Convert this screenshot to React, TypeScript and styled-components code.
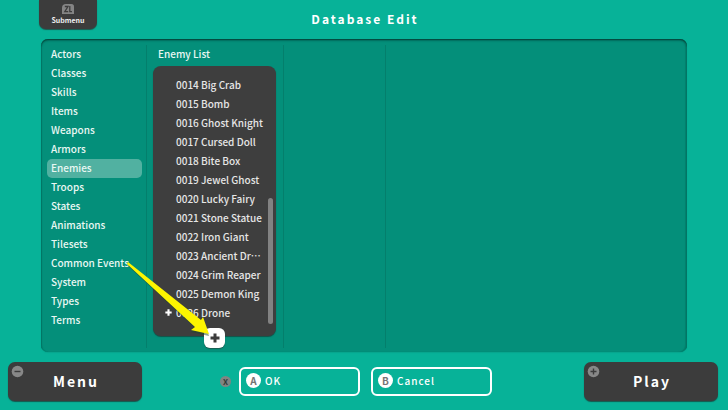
import React from "react";
import styled, { createGlobalStyle } from "styled-components";

const GlobalStyle = createGlobalStyle`
  *, *::before, *::after { box-sizing: border-box; }
  body {
    margin: 0;
    background: #07b298;
    color: #e9f7f3;
    font-family: "Noto Sans CJK JP", "Noto Sans", sans-serif;
    font-size: 10px;
    font-weight: 500;
  }
  button {
    font: inherit;
    color: inherit;
    border: 0;
    padding: 0;
    background: none;
    cursor: pointer;
  }
`;

const Page = styled.div`
  min-height: 100vh;
  display: flex;
  flex-direction: column;
`;

const Header = styled.header`
  display: grid;
  grid-template-columns: 1fr auto 1fr;
  align-items: start;
  height: 39px;
  padding: 0 39px;
`;

const SubmenuButton = styled.button`
  justify-self: start;
  display: flex;
  flex-direction: column;
  align-items: center;
  gap: 1px;
  width: 58px;
  height: 29px;
  padding-top: 4px;
  border-radius: 0 0 7px 7px;
  background: #3c3c3c;
  color: #eeeeee;
  box-shadow: 0 1px 1px #1d5a50;
  font-size: 7px;
  line-height: 10px;
  font-weight: 700;
`;

const Title = styled.h1`
  margin: 0;
  padding: 9px 0 0 2px;
  color: #ffffff;
  font-size: 12px;
  line-height: 20px;
  font-weight: 700;
  letter-spacing: 2px;
`;

const Panel = styled.main`
  flex: 1;
  display: grid;
  grid-template-columns: 106px 137px 102px 1fr;
  margin: 0 41px;
  padding: 6px 0 4px;
  border-radius: 7px;
  background: #048f7a;
  box-shadow: inset 0 1px 1px #04493f, inset 0 2px 2px #04705f, inset 1px 0 1px #04806d,
    inset -2px 0 1px #04806d, 0 1px 1px #08a58d;
`;

const Column = styled.section<{ $last?: boolean }>`
  min-width: 0;
  padding: 0 7px 0 6px;
  border-right: ${(p) => (p.$last ? "0" : "1px solid #047f6c")};
`;

const Categories = styled.nav`
  min-width: 0;
  padding: 0 4px 0 6px;
  border-right: 1px solid #047f6c;
`;

const CategoryButton = styled.button<{ $selected?: boolean }>`
  display: block;
  width: 95px;
  height: 19px;
  padding: 0 0 2px 4px;
  border-radius: 5px;
  background: ${(p) => (p.$selected ? "#51b1a1" : "transparent")};
  text-align: left;
  line-height: 17px;
`;

const ListTitle = styled.h2`
  margin: 0;
  padding: 0 5px 2px;
  font-size: 10px;
  font-weight: 500;
  line-height: 17px;
`;

const ListBox = styled.div`
  position: relative;
  height: 270px;
  margin-top: 2px;
  padding: 9px 10px;
  border-radius: 8px;
  background: #3e3e3e;
  box-shadow: 0 1px 1px #135147;
`;

const EnemyItems = styled.ul`
  margin: 0;
  padding: 0;
  list-style: none;
`;

const EnemyButton = styled.button`
  display: grid;
  grid-template-columns: 13px 1fr;
  align-items: center;
  width: 100%;
  height: 19px;
  line-height: 19px;
  text-align: left;
  white-space: nowrap;
  color: #e6e6e6;
`;

const Marker = styled.span`
  display: flex;
  padding-left: 2px;
`;

const ScrollThumb = styled.div`
  position: absolute;
  right: 3px;
  bottom: 12px;
  width: 5px;
  height: 126px;
  border-radius: 3px;
  background: #828282;
`;

const AddButton = styled.button`
  position: absolute;
  left: 51px;
  bottom: -12px;
  display: grid;
  place-items: center;
  width: 21px;
  height: 20px;
  border-radius: 6px;
  background: #ffffff;
  box-shadow: 0 1px 1px #1c5c51;
`;

const Arrow = styled.svg`
  position: absolute;
  left: -29px;
  top: 194px;
  width: 88px;
  height: 80px;
  pointer-events: none;
`;

const Footer = styled.footer`
  display: flex;
  justify-content: space-between;
  padding: 10px 10px 9px 8px;
`;

const MainButton = styled.button`
  position: relative;
  width: 134px;
  height: 39px;
  padding: 0 0 2px 2px;
  border-radius: 7px;
  background: #3c3c3c;
  color: #ffffff;
  box-shadow: 0 1px 1px #17564c;
  font-size: 14px;
  line-height: 20px;
  font-weight: 700;
  letter-spacing: 2px;
`;

const Badge = styled.svg`
  position: absolute;
  left: 3px;
  top: 3px;
  width: 13px;
  height: 13px;
`;

const Actions = styled.div`
  display: flex;
  align-items: center;
  gap: 11px;
  margin-right: 14px;
  padding-bottom: 1px;
`;

const Hint = styled.span`
  display: grid;
  place-items: center;
  width: 11px;
  height: 11px;
  margin-right: -3px;
  border-radius: 50%;
  background: #808482;
  color: #2f3a38;
  font-size: 8px;
  line-height: 11px;
  font-weight: 700;
`;

const ActionButton = styled.button`
  display: flex;
  align-items: center;
  gap: 4px;
  width: 121px;
  height: 29px;
  padding: 0 5px 1px;
  border: 2px solid #ffffff;
  border-radius: 6px;
  color: #ffffff;
  letter-spacing: 1px;
`;

const Key = styled.span`
  display: grid;
  place-items: center;
  width: 15px;
  height: 15px;
  border-radius: 50%;
  background: #ffffff;
  color: #747474;
  font-size: 10px;
  line-height: 15px;
  font-weight: 700;
  letter-spacing: 0;
`;

const categories = [
  "Actors", "Classes", "Skills", "Items", "Weapons", "Armors", "Enemies", "Troops",
  "States", "Animations", "Tilesets", "Common Events", "System", "Types", "Terms",
];

const enemies = [
  "0014 Big Crab", "0015 Bomb", "0016 Ghost Knight", "0017 Cursed Doll", "0018 Bite Box",
  "0019 Jewel Ghost", "0020 Lucky Fairy", "0021 Stone Statue", "0022 Iron Giant",
  "0023 Ancient Dr…", "0024 Grim Reaper", "0025 Demon King", "0026 Drone",
];

const Plus = ({ size, color, thickness }: { size: number; color: string; thickness: number }) => (
  <svg width={size} height={size} viewBox="0 0 10 10" aria-hidden="true">
    <path d="M5 0.5V9.5M0.5 5H9.5" stroke={color} strokeWidth={thickness} />
  </svg>
);

const TriggerIcon = () => (
  <svg width="12" height="10" viewBox="0 0 12 10" aria-hidden="true">
    <path d="M0 10V4Q0 0 4 0H9.500Q12 0 12 2.500V10Z" fill="#858585" />
    <path d="M2.800 2.500H6L2.800 7.700H6.200M7.800 2V7.700H10" fill="none" stroke="#3c3c3c" strokeWidth="1.300" />
  </svg>
);

export default function App() {
  return (
    <>
      <GlobalStyle />
      <Page>
        <Header>
          <SubmenuButton type="button">
            <TriggerIcon />
            Submenu
          </SubmenuButton>
          <Title>Database Edit</Title>
        </Header>
        <Panel>
          <Categories aria-label="Database categories">
            {categories.map((name) => (
              <CategoryButton key={name} type="button" $selected={name === "Enemies"}>
                {name}
              </CategoryButton>
            ))}
          </Categories>
          <Column>
            <ListTitle>Enemy List</ListTitle>
            <ListBox>
              <EnemyItems lang="ja">
                {enemies.map((name, i) => (
                  <li key={name}>
                    <EnemyButton type="button">
                      <Marker>
                        {i === enemies.length - 1 && <Plus size={7} color="#ffffff" thickness={3} />}
                      </Marker>
                      <span>{name}</span>
                    </EnemyButton>
                  </li>
                ))}
              </EnemyItems>
              <ScrollThumb />
              <AddButton type="button" aria-label="Add enemy">
                <Plus size={10} color="#3c3c3c" thickness={3} />
              </AddButton>
              <Arrow viewBox="124 260 88 80" aria-hidden="true">
                <path
                  d="M127 264L128 262L202 320L203 317L209 335L191 331L195 327Z"
                  fill="#1c4a2c"
                  opacity="0.5"
                  transform="translate(0 1)"
                />
                <path d="M127 264L128 262L201 320L203 317L209 334L191 330L195 327Z" fill="#fdf500" />
              </Arrow>
            </ListBox>
          </Column>
          <Column />
          <Column $last />
        </Panel>
        <Footer>
          <MainButton type="button">
            <Badge viewBox="0 0 13 13" aria-hidden="true">
              <circle cx="6.500" cy="6.500" r="5.800" fill="#888888" />
              <path d="M3.500 6.500H9.500" stroke="#3c3c3c" strokeWidth="1.400" />
            </Badge>
            Menu
          </MainButton>
          <Actions>
            <Hint>X</Hint>
            <ActionButton type="button"><Key>A</Key>OK</ActionButton>
            <ActionButton type="button"><Key>B</Key>Cancel</ActionButton>
          </Actions>
          <MainButton type="button">
            <Badge viewBox="0 0 13 13" aria-hidden="true">
              <circle cx="6.500" cy="6.500" r="5.800" fill="#888888" />
              <path d="M3.500 6.500H9.500M6.500 3.500V9.500" stroke="#3c3c3c" strokeWidth="1.400" />
            </Badge>
            Play
          </MainButton>
        </Footer>
      </Page>
    </>
  );
}
